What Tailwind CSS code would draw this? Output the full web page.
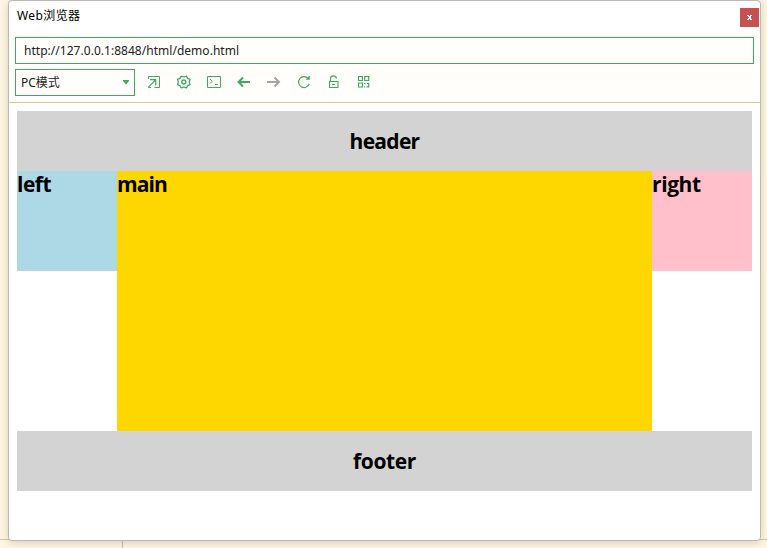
<!DOCTYPE html>
<html lang="zh">
<head>
<meta charset="utf-8">
<title>Web浏览器</title>
<script src="https://cdn.jsdelivr.net/npm/@tailwindcss/browser@4"></script>
</head>
<body class="relative h-[548px] w-[767px] overflow-hidden bg-[#fff6e5] font-['Noto_Sans','Noto_Sans_CJK_SC',sans-serif]">
<div class="absolute top-[539px] left-0 h-px w-full bg-[#d6c897]"></div>
<div class="absolute top-[540px] left-[122px] h-2 w-px bg-[#cfbf88]"></div>
<div class="relative ml-2 flex h-[541px] w-[753px] flex-col overflow-hidden rounded-[4px] border border-[#babab0] bg-white shadow-[0_2px_9px_rgba(90,90,60,0.25)]">
  <header class="flex h-[31px] shrink-0 items-start justify-between pr-px pl-2">
    <h1 class="pt-[5px] text-[12px] leading-[20px] tracking-[0.4px] text-black">Web浏览器</h1>
    <button class="mt-[7px] flex h-[19px] w-[19px] items-center justify-center bg-[#c75050]" aria-label="关闭">
      <svg width="5" height="5" viewBox="0 0 5 5" fill="#fff" shape-rendering="crispEdges"><path d="M0 0H2V1H0ZM3 0H5V1H3ZM1 1H4V2H1ZM1.5 2H3.5V3H1.5ZM1 3H4V4H1ZM0 4H2V5H0ZM3 4H5V5H3Z"/></svg>
    </button>
  </header>
  <div class="h-[71px] shrink-0 border-b border-[#d6c897] bg-[#fffefa] px-1.5 pt-[5px]">
    <div class="flex h-[27px] items-center border border-[#41a863] pl-2 text-[12px] tracking-[0.03px] text-[#222]">http://127.0.0.1:8848/html/demo.html</div>
    <div class="mt-[5px] flex h-[27px] items-center">
      <div class="flex h-[27px] w-[120px] items-center justify-between border border-[#41a863] pr-[5px] pl-[5px] text-[12px] text-[#222]"><span>PC模式</span><svg width="6" height="5" viewBox="0 0 6 5" fill="#41a863"><path d="M0 0H6V1L3 4.5L0 1Z"/></svg></div>
      <div class="ml-[11px] flex gap-[14px] pb-[2px] text-[#41a863]">
        <svg width="16" height="16" viewBox="0 0 16 16" fill="none" stroke="currentColor"><path d="M2.5 5V2.5H13.5V13.5H8.5M2.5 13.5H5"/><path d="M4 5.6H9.7V11.5M9.5 5.8L2.3 13.3" stroke-width="1.2"/></svg>
        <svg width="16" height="16" viewBox="0 0 16 16" fill="none" stroke="currentColor" stroke-width="1.3"><path d="M5.2 2.2Q8 3.4 10.4 2.2L11.7 4.4L14 5.3Q12.6 8 14 10.7L11.7 11.6L10.4 13.8Q8 12.6 5.2 13.8L3.9 11.6L1.6 10.7Q3 8 1.6 5.3L3.9 4.4Z"/><circle cx="7.8" cy="8" r="2"/></svg>
        <svg width="16" height="16" viewBox="0 0 16 16" fill="none" stroke="currentColor"><path d="M1.5 2.5H14.5V13.5H1.5Z"/><path d="M4 5L6.2 7.2L4 9.5M9 10.5H12"/></svg>
        <svg width="16" height="16" viewBox="0 0 16 16" fill="none" stroke="currentColor" stroke-width="2"><path d="M14 8H3M7 3.5L2.5 8L7 12.5"/></svg>
        <svg width="16" height="16" viewBox="0 0 16 16" fill="none" stroke="#a6a6a6" stroke-width="2"><path d="M1 8H12M8.5 3.5L13 8L8.5 12.5"/></svg>
        <svg width="16" height="16" viewBox="0 0 16 16" fill="none" stroke="currentColor" stroke-width="1.2"><path d="M12.2 4.4A5.5 5.5 0 1 0 13.2 10"/><path d="M13.5 2V5.5H10Z" fill="currentColor" stroke-width=".5"/></svg>
        <svg width="16" height="16" viewBox="0 0 16 16" fill="none" stroke="currentColor" stroke-width="1.1"><path d="M3.5 7.5H12V13.5H3.5ZM4.5 7V5A2.9 2.9 0 0 1 10.4 4.6M6 10.5H9"/></svg>
        <svg width="16" height="16" viewBox="0 0 16 16" fill="none" stroke="currentColor" stroke-width="1.2"><path d="M2.5 2.5H6.5V6.5H2.5ZM8.7 2.5H12.7V6.5H8.7ZM2.5 9H6.5V13H2.5ZM8 9.5H9.5M11 9.5H12.7V12.8H10.5M8 12.8H9.2"/></svg>
      </div>
    </div>
  </div>
  <main class="mt-2 flex flex-col px-2 font-['Open_Sans','Noto_Sans',sans-serif] text-[21px] leading-[26px] font-bold tracking-[-0.7px] text-black">
    <div class="flex h-[60px] items-center justify-center bg-[lightgray]">header</div>
    <div class="flex h-[260px] items-start">
      <div class="h-[100px] w-[100px] bg-[lightblue] tracking-[-0.5px]">left</div>
      <div class="h-[260px] flex-1 bg-[gold] tracking-[-0.9px]">main</div>
      <div class="h-[100px] w-[100px] bg-[pink] tracking-[-0.4px]">right</div>
    </div>
    <div class="flex h-[60px] items-center justify-center bg-[lightgray] tracking-[-0.4px]">footer</div>
  </main>
</div>
</body>
</html>
